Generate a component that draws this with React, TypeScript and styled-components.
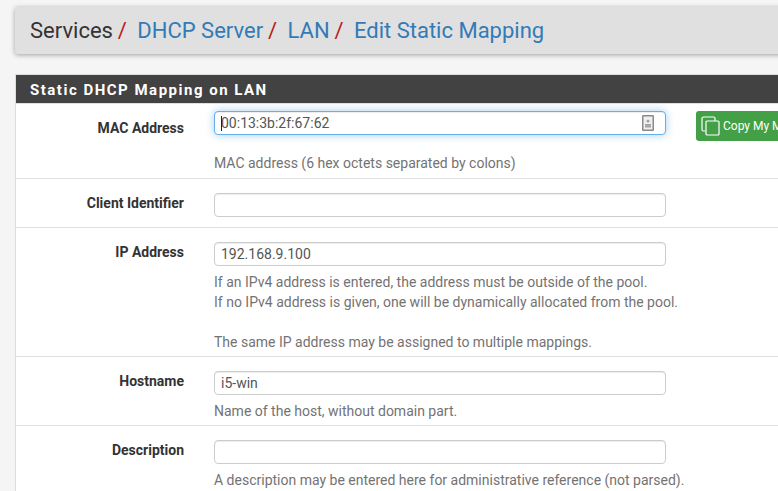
import styled, { createGlobalStyle } from "styled-components";

const GlobalStyle = createGlobalStyle`
  html, body {
    margin: 0;
    padding: 0;
    width: 778px;
    height: 491px;
    overflow: hidden;
    background: #f5f5f5;
    font-family: Roboto, "Liberation Sans", sans-serif;
  }
`;

const Page = styled.div`
  width: 778px;
  height: 491px;
  overflow: hidden;
  padding: 7px 0 0 15px;
  box-sizing: border-box;
`;

const Breadcrumb = styled.div`
  width: 800px;
  height: 47px;
  display: flex;
  align-items: center;
  padding-left: 15px;
  box-sizing: border-box;
  background: #e0e0e0;
  border-radius: 3px;
  box-shadow: 0 1px 5px rgba(0, 0, 0, 0.35);
  font-size: 22px;
  color: #333;
`;

const Crumb = styled.a`
  color: #337ab7;
  text-decoration: none;
`;

const Slash = styled.span`
  color: #b71c1c;
  margin: 0 10.5px 0 4.8px;
`;

const Panel = styled.section`
  margin-top: 20px;
  width: 800px;
  border-top: 1px solid #ddd;
  border-left: 1px solid #ddd;
  background: #fff;
`;

const PanelHeading = styled.h2`
  margin: 0;
  height: 28px;
  line-height: 30px;
  padding-left: 14px;
  background: #424242;
  color: #fff;
  font-size: 15px;
  font-weight: 700;
  letter-spacing: 1.5px;
`;

const Row = styled.div<{ $height: number }>`
  display: grid;
  grid-template-columns: 168px 452px auto;
  column-gap: 30px;
  height: ${(p) => p.$height}px;
  box-sizing: border-box;
  padding-top: 7px;
  border-top: 1px solid #e0e0e0;
`;

const Label = styled.label`
  grid-column: 1;
  text-align: right;
  font-size: 14px;
  font-weight: 700;
  line-height: 18px;
  color: #333;
  padding-top: 8px;
`;

const Field = styled.div<{ $top?: number }>`
  grid-column: 2;
  position: relative;
  padding-top: ${(p) => p.$top ?? 7}px;
`;

const TextInput = styled.input<{ $focused?: boolean }>`
  display: block;
  width: 100%;
  height: 24px;
  box-sizing: border-box;
  padding: 0 6px;
  margin: 0;
  font: 14px Roboto, sans-serif;
  color: #555;
  background: #fff;
  outline: none;
  border-radius: 4px;
  border: 1px solid ${(p) => (p.$focused ? "#66afe9" : "#ccc")};
  box-shadow: ${(p) =>
    p.$focused
      ? "inset 0 1px 1px rgba(0,0,0,.075), 0 0 8px rgba(102,175,233,.6)"
      : "inset 0 1px 1px rgba(0,0,0,.075)"};
`;

const Caret = styled.span`
  position: absolute;
  left: 7px;
  top: 5px;
  width: 1px;
  height: 15px;
  background: #222;
`;

const FillIcon = styled.svg`
  position: absolute;
  right: 12px;
  top: 4px;
`;

const Help = styled.div<{ $gap?: number }>`
  margin-top: ${(p) => p.$gap ?? 6}px;
  font-size: 14px;
  line-height: 20px;
  color: #737373;
  white-space: nowrap;
`;

const CopyButton = styled.button`
  grid-column: 3;
  width: 120px;
  height: 30px;
  display: flex;
  align-items: center;
  gap: 3px;
  padding: 0 0 0 5px;
  border: 0;
  border-radius: 3px;
  background: #43a047;
  color: #fff;
  font: 12px Roboto, sans-serif;
  white-space: nowrap;
`;

function App() {
  return (
    <Page>
      <GlobalStyle />
      <Breadcrumb>
        <span>Services</span>
        <Slash>/</Slash>
        <Crumb>DHCP Server</Crumb>
        <Slash>/</Slash>
        <Crumb>LAN</Crumb>
        <Slash>/</Slash>
        <Crumb>Edit Static Mapping</Crumb>
      </Breadcrumb>
      <Panel>
        <PanelHeading>Static DHCP Mapping on LAN</PanelHeading>
        <Row $height={75}>
          <Label>MAC Address</Label>
          <Field $top={0}>
            <TextInput $focused readOnly value="00:13:3b:2f:67:62" />
            <Caret />
            <FillIcon width="12" height="16" viewBox="0 0 12 16">
              <rect x="0.75" y="0.75" width="10.5" height="14.5" rx="0.5" fill="#efefef" stroke="#8a8a8a" strokeWidth="1.5" />
              <circle cx="6" cy="6" r="1.5" fill="#a0a0a0" />
              <rect x="3" y="9" width="6" height="3.5" fill="#a8a8a8" />
            </FillIcon>
            <Help $gap={18}>MAC address (6 hex octets separated by colons)</Help>
          </Field>
          <CopyButton>
            <svg width="19" height="20" viewBox="0 0 19 20" fill="none" stroke="#fff" strokeWidth="1.2">
              <path d="M4.5 15H2.5A1.5 1.5 0 0 1 1 13.5V2.5A1.5 1.5 0 0 1 2.5 1h10A1.5 1.5 0 0 1 14 2.5V5" />
              <rect x="5" y="5" width="13" height="14" rx="1" />
            </svg>
            Copy My MAC
          </CopyButton>
        </Row>
        <Row $height={49}>
          <Label>Client Identifier</Label>
          <Field>
            <TextInput readOnly value="" />
          </Field>
        </Row>
        <Row $height={129}>
          <Label>IP Address</Label>
          <Field>
            <TextInput readOnly value="192.168.9.100" />
            <Help>
              If an IPv4 address is entered, the address must be outside of the pool.
              <br />
              If no IPv4 address is given, one will be dynamically allocated from the pool.
              <br />
              <br />
              The same IP address may be assigned to multiple mappings.
            </Help>
          </Field>
        </Row>
        <Row $height={69}>
          <Label>Hostname</Label>
          <Field>
            <TextInput readOnly value="i5-win" />
            <Help>Name of the host, without domain part.</Help>
          </Field>
        </Row>
        <Row $height={69}>
          <Label>Description</Label>
          <Field>
            <TextInput readOnly value="" />
            <Help>A description may be entered here for administrative reference (not parsed).</Help>
          </Field>
        </Row>
      </Panel>
    </Page>
  );
}

export default App;
